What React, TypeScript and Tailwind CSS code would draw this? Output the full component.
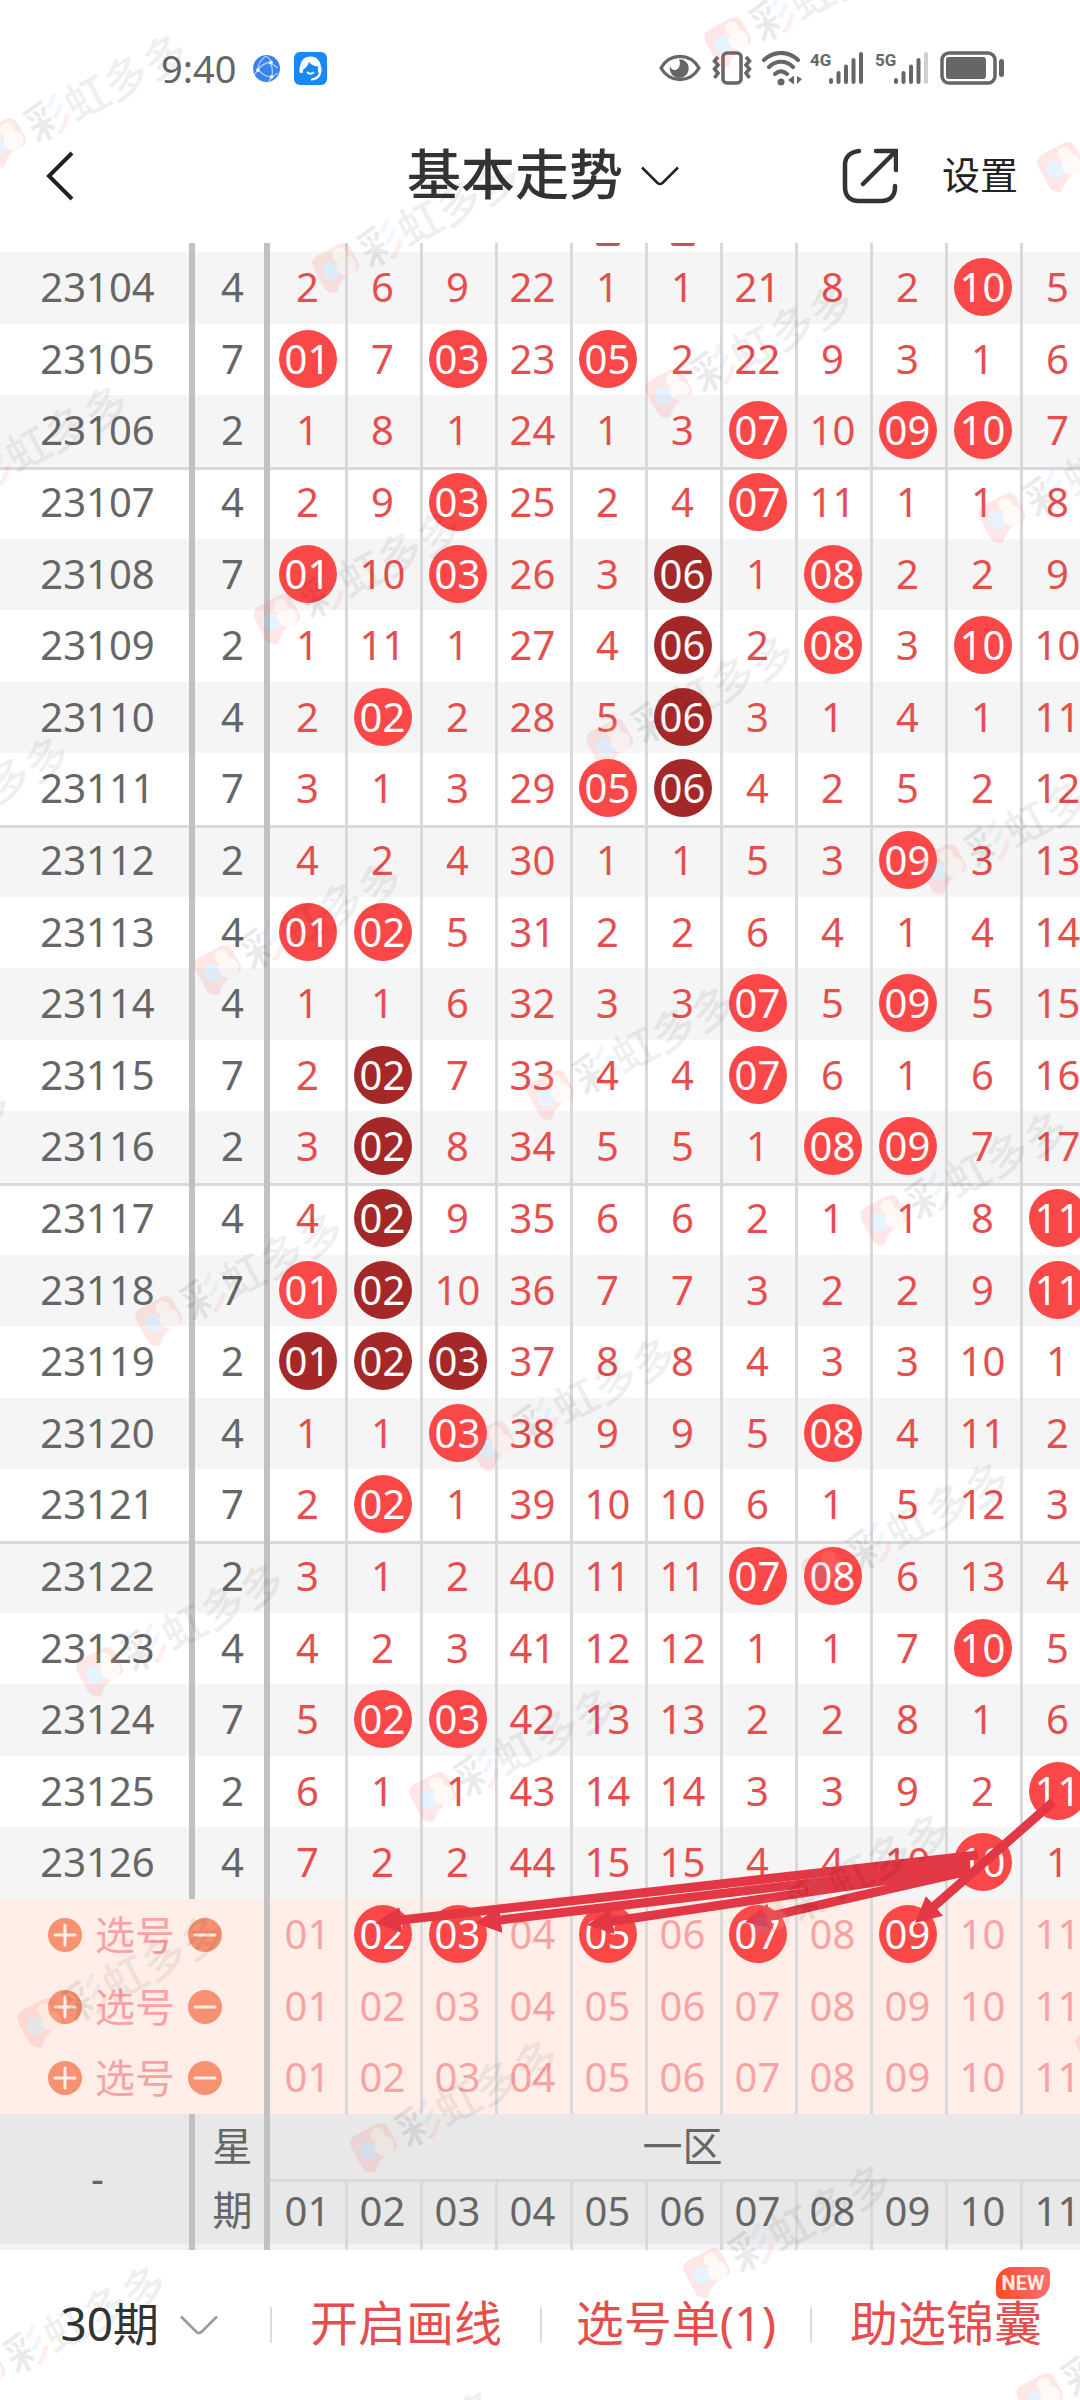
import React from 'react';
import clsx from 'clsx';

interface Draw {
  issue: number;
  week: number;
  // "*" marks a drawn ball, "#" a ball that repeats several draws in a row
  cells: string;
}

const draws: Draw[] = [
  { issue: 23104, week: 4, cells: '2 6 9 22 1 1 21 8 2 *10 5' },
  { issue: 23105, week: 7, cells: '*01 7 *03 23 *05 2 22 9 3 1 6' },
  { issue: 23106, week: 2, cells: '1 8 1 24 1 3 *07 10 *09 *10 7' },
  { issue: 23107, week: 4, cells: '2 9 *03 25 2 4 *07 11 1 1 8' },
  { issue: 23108, week: 7, cells: '*01 10 *03 26 3 #06 1 *08 2 2 9' },
  { issue: 23109, week: 2, cells: '1 11 1 27 4 #06 2 *08 3 *10 10' },
  { issue: 23110, week: 4, cells: '2 *02 2 28 5 #06 3 1 4 1 11' },
  { issue: 23111, week: 7, cells: '3 1 3 29 *05 #06 4 2 5 2 12' },
  { issue: 23112, week: 2, cells: '4 2 4 30 1 1 5 3 *09 3 13' },
  { issue: 23113, week: 4, cells: '*01 *02 5 31 2 2 6 4 1 4 14' },
  { issue: 23114, week: 4, cells: '1 1 6 32 3 3 *07 5 *09 5 15' },
  { issue: 23115, week: 7, cells: '2 #02 7 33 4 4 *07 6 1 6 16' },
  { issue: 23116, week: 2, cells: '3 #02 8 34 5 5 1 *08 *09 7 17' },
  { issue: 23117, week: 4, cells: '4 #02 9 35 6 6 2 1 1 8 *11' },
  { issue: 23118, week: 7, cells: '*01 #02 10 36 7 7 3 2 2 9 *11' },
  { issue: 23119, week: 2, cells: '#01 #02 #03 37 8 8 4 3 3 10 1' },
  { issue: 23120, week: 4, cells: '1 1 *03 38 9 9 5 *08 4 11 2' },
  { issue: 23121, week: 7, cells: '2 *02 1 39 10 10 6 1 5 12 3' },
  { issue: 23122, week: 2, cells: '3 1 2 40 11 11 *07 *08 6 13 4' },
  { issue: 23123, week: 4, cells: '4 2 3 41 12 12 1 1 7 *10 5' },
  { issue: 23124, week: 7, cells: '5 *02 *03 42 13 13 2 2 8 1 6' },
  { issue: 23125, week: 2, cells: '6 1 1 43 14 14 3 3 9 2 *11' },
  { issue: 23126, week: 4, cells: '7 2 2 44 15 15 4 4 10 *10 1' },
];

const numbers = ['01', '02', '03', '04', '05', '06', '07', '08', '09', '10', '11'];

const pickRows: string[][] = [['02', '03', '05', '07', '09'], [], []];

// Freehand guide lines, in table coordinates: x1, y1, x2, y2
const arrows = [
  [978, 1612, 375, 1680],
  [970, 1621, 475, 1680],
  [970, 1625, 587, 1682],
  [968, 1628, 745, 1679],
  [1053, 1559, 915, 1680],
];

const numCell = 'p-0 pb-[2px] text-center align-middle';
const columnLine = 'border-l-[3px] border-[#d9d9d9] pr-[3px]';
const bar = 'border-r-[6px] border-[#c1c1c1] pl-[6px]';

const Ball: React.FC<{ value: string; dark?: boolean }> = ({ value, dark }) => (
  <span
    className={clsx(
      'mx-auto flex size-[58px] items-center justify-center rounded-full text-white',
      dark ? 'bg-[#a52828]' : 'bg-[#fa4848]'
    )}
  >
    {value}
  </span>
);

const SignalBars: React.FC<{ weak?: boolean }> = ({ weak }) => (
  <svg width="36" height="34" viewBox="0 0 36 34" fill="none" strokeWidth="4" strokeLinecap="round" stroke="#666">
    <path d="M3 31v-2M10.500 31v-9M18 31V15.500M25.500 31V9" />
    <path d="M33 31V3" stroke={weak ? '#cfcfcf' : '#666'} />
  </svg>
);

const Chevron: React.FC<{ color: string }> = ({ color }) => (
  <svg width="38" height="20" viewBox="0 0 38 20" fill="none" stroke={color} strokeWidth="2.500" className="pointer-events-none">
    <path d="M1 1.500 16.500 17Q19 19 21.500 17L37 1.500" />
  </svg>
);

const StatusBar: React.FC = () => (
  <div className="flex h-[108px] items-end justify-between pb-[20px] pl-[161px] pr-[75px]">
    <div className="flex h-10 items-center">
      <span className="w-[92px] text-[38px] leading-[40px] text-[#666]">9:40</span>
      <svg width="27" height="27" viewBox="0 0 27 27" className="mr-[14px]">
        <circle cx="13.500" cy="13.500" r="13.500" fill="#3b82ee" />
        <g fill="none" stroke="#a9cdfb" strokeWidth="1.300">
          <path d="M13 1C7 5 5 10 5 15c4 4 9 7 14 7 1-6 1-11-3-15M5 15c3-5 7-7 13-8M13 1c3 2 5 4 6 8l6 4M5 15l-3 4M19 22l-3 4M19 22l6-4" />
        </g>
        <circle cx="5" cy="15" r="1.800" fill="#fff" />
        <circle cx="18" cy="7.500" r="1.800" fill="#fff" />
        <circle cx="18.500" cy="22" r="1.800" fill="#fff" />
      </svg>
      <svg width="33" height="33" viewBox="0 0 33 33">
        <rect width="33" height="33" rx="6" fill="#1788f5" />
        <path d="M7 17C7 9.500 11 5.500 16.500 5.500S26 9.500 26 17" fill="none" stroke="#fff" strokeWidth="2.200" />
        <path d="M8.500 18C7 9.500 11 5.500 16.500 5.500c5 0 8.500 3.500 9 9-5 0-8-1.500-10.500-4.500-1 3.500-3 6-6.500 8z" fill="#fff" />
        <rect x="5.500" y="14.500" width="3.500" height="6.500" rx="1.500" fill="#fff" />
        <rect x="24" y="14.500" width="3.500" height="6.500" rx="1.500" fill="#fff" />
        <path d="M26 20c0 4-3 6.500-8 7.500" fill="none" stroke="#fff" strokeWidth="2.200" strokeLinecap="round" />
        <path d="M13.500 20.500q3 2.500 6 0" fill="none" stroke="#fff" strokeWidth="1.800" strokeLinecap="round" />
      </svg>
    </div>
    <div className="flex h-10 items-center">
      <svg width="42" height="28" viewBox="0 0 42 28" className="mr-[11px]">
        <path d="M2 14C11-1.500 31-1.500 40 14 31 29.500 11 29.500 2 14Z" fill="none" stroke="#666" strokeWidth="3.200" />
        <path d="M20 5a9.500 9.500 0 1 1-9 7c1 3 3 4.500 5.500 4 4-1 5.500-6 3.500-11z" fill="#666" />
      </svg>
      <svg width="40" height="34" viewBox="0 0 40 34" fill="none" stroke="#666" className="mr-[10px]">
        <rect x="11" y="2" width="18" height="30" rx="4" strokeWidth="3.500" />
        <path d="m6 6-3.500 4L6 14l-3.500 4L6 22l-3.500 5M34 6l3.500 4-3.500 4 3.500 4-3.500 4 3.500 5" strokeWidth="3.500" />
      </svg>
      <svg width="41" height="35" viewBox="0 0 41 35" fill="none" stroke="#666" strokeWidth="4" strokeLinecap="round" className="mr-[7px]">
        <path d="M2 9C12-.500 26-.500 36 9M7 16c7-7 17-7 24 0M13 23c4-3.500 8-3.500 12 0" />
        <circle cx="19" cy="31" r="3.500" fill="#666" stroke="none" />
        <path d="M32 24.500v9l-6-4.500zM35 25l5 3-5 5z" fill="#666" stroke="none" />
      </svg>
      <span className="w-[18px] self-start whitespace-nowrap font-['Roboto',sans-serif] text-[17px] font-bold leading-[24px] text-[#666]">4G</span>
      <SignalBars />
      <span className="ml-[11px] w-[18px] self-start whitespace-nowrap font-['Roboto',sans-serif] text-[17px] font-bold leading-[24px] text-[#666]">5G</span>
      <SignalBars weak />
      <svg width="65" height="34" viewBox="0 0 65 34" className="ml-[11px]">
        <rect x="2" y="2" width="53" height="30" rx="7" fill="none" stroke="#666" strokeWidth="3.500" />
        <rect x="6" y="6" width="40" height="22" rx="3" fill="#666" />
        <rect x="59" y="8" width="5" height="18" rx="2.500" fill="#666" />
      </svg>
    </div>
  </div>
);

const Header: React.FC = () => (
  <header className="flex h-[135px] items-center justify-between pl-[44px] pr-[58px] text-[#222]">
    <button aria-label="返回" className="w-[200px]">
      <svg width="32" height="52" viewBox="0 0 32 52" fill="none" stroke="#222" strokeWidth="4">
        <path d="M28 3 5 26l23 23" />
      </svg>
    </button>
    <label className="flex items-center gap-[18px]">
      <select aria-label="走势类型" className="appearance-none bg-transparent pb-1 text-[54px] font-medium leading-[72px] text-[#333]">
        <option>基本走势</option>
      </select>
      <Chevron color="#222" />
    </label>
    <div className="flex w-[180px] items-center gap-[44px]">
      <button aria-label="分享">
        <svg width="56" height="56" viewBox="0 0 56 56" fill="none" stroke="#333" strokeWidth="4.500" strokeLinecap="round">
          <path d="M17 3C8 4 3 9 3 17v22c0 9 5 14 14 14h22c9 0 14-5 14-14v-1" />
          <path d="M34 3h20v19M53 4 21 36" />
        </svg>
      </button>
      <button className="whitespace-nowrap pb-1 text-[38px] leading-[56px]">设置</button>
    </div>
  </header>
);

const TrendTable: React.FC = () => (
  <div className="relative overflow-hidden">
    <table className="w-[1095px] table-fixed border-separate border-spacing-0 text-[40px] leading-[58px] text-[#666]">
      <colgroup>
        <col className="w-[195px]" />
        <col className="w-[75px]" />
        {numbers.map((n) => (
          <col key={n} className="w-[75px]" />
        ))}
      </colgroup>
      <tbody>
        {/* Bottom edge of the row scrolled under the header */}
        <tr className="h-[9px]">
          <td className={clsx('p-0', bar)} />
          <td className={clsx('p-0', bar)} />
          {numbers.map((n, i) => (
            <td key={n} className={clsx('p-0 align-top', i > 0 && columnLine)}>
              {(n === '05' || n === '06') && <div className="mx-auto h-[3px] w-6 rounded-b-full bg-[#cf5050]" />}
            </td>
          ))}
        </tr>
        {draws.map((draw, row) => {
          const place = draw.issue % 5;
          const groupLine = place === 2 && 'shadow-[inset_0_3px_0_#d9d9d9]';
          return (
            <tr
              key={draw.issue}
              className={clsx(row % 2 === 0 ? 'bg-[#f5f5f5]' : 'bg-white', place === 0 || place === 3 ? 'h-[71px]' : 'h-[72px]')}
            >
              <td className={clsx(numCell, bar, groupLine)}>{draw.issue}</td>
              <td className={clsx(numCell, bar, groupLine)}>{draw.week}</td>
              {draw.cells.split(' ').map((cell, i) => (
                <td key={i} className={clsx(numCell, 'text-[#e64e4e]', i > 0 && columnLine, groupLine)}>
                  {/^[*#]/.test(cell) ? <Ball value={cell.slice(1)} dark={cell[0] === '#'} /> : cell}
                </td>
              ))}
            </tr>
          );
        })}
        {pickRows.map((picked, row) => (
          <tr key={row} className={clsx('bg-[#feeee7] text-[#f8a3a3]', row === 1 ? 'h-[71px]' : 'h-[72px]')}>
            <td colSpan={2} className="border-r-[6px] border-[#c1c1c1] p-0 pl-[48px] align-middle">
              <div className="flex items-center gap-[13px]">
                <button aria-label="添加" className="flex size-[34px] items-center justify-center rounded-full bg-[#f69272]">
                  <svg width="24" height="24" viewBox="0 0 24 24" stroke="#feeee7" strokeWidth="3" strokeLinecap="round">
                    <path d="M12 2v20M2 12h20" />
                  </svg>
                </button>
                <span>选号</span>
                <button aria-label="删除" className="flex size-[34px] items-center justify-center rounded-full bg-[#f69272]">
                  <svg width="24" height="24" viewBox="0 0 24 24" stroke="#feeee7" strokeWidth="3" strokeLinecap="round">
                    <path d="M2 12h20" />
                  </svg>
                </button>
              </div>
            </td>
            {numbers.map((n, i) => (
              <td key={n} className={clsx(numCell, i > 0 && columnLine)}>
                <button aria-pressed={picked.includes(n)} className="block w-full">
                  {picked.includes(n) ? <Ball value={n} /> : n}
                </button>
              </td>
            ))}
          </tr>
        ))}
      </tbody>
      <tfoot className="bg-[#e8e8e8]">
        <tr className="h-[65px]">
          <td rowSpan={2} className={clsx(numCell, bar)}>-</td>
          <td rowSpan={2} className={clsx(numCell, bar, 'leading-[64px]')}>
            星
            <br />
            期
          </td>
          <td colSpan={11} className={numCell}>一区</td>
        </tr>
        <tr className="h-[65px]">
          {numbers.map((n, i) => (
            <td key={n} className={clsx(numCell, 'shadow-[inset_0_3px_0_#d9d9d9]', i > 0 && columnLine)}>{n}</td>
          ))}
        </tr>
        <tr className="h-[6px] bg-[#f1f1f6]">
          <td className={clsx('p-0', bar)} />
          <td className={clsx('p-0', bar)} />
          {numbers.map((n, i) => (
            <td key={n} className={clsx('p-0', i > 0 && columnLine)} />
          ))}
        </tr>
      </tfoot>
    </table>

    {/* Guide lines drawn over the trend */}
    <svg className="pointer-events-none absolute left-0 top-0 h-full w-[1095px]">
      <defs>
        <marker id="head" markerUnits="userSpaceOnUse" markerWidth="26" markerHeight="26" refX="2" refY="13" orient="auto">
          <path d="M0 0 26 13 0 26Z" fill="#e23744" />
        </marker>
      </defs>
      {arrows.map(([x1, y1, x2, y2]) => {
        // the shaft stops short so that the head's tip lands on the end point
        const k = 1 - 24 / Math.hypot(x2 - x1, y2 - y1);
        return (
          <line
            key={x2}
            x1={x1}
            y1={y1}
            x2={x1 + (x2 - x1) * k}
            y2={y1 + (y2 - y1) * k}
            stroke="#e23744"
            strokeWidth="9"
            markerEnd="url(#head)"
          />
        );
      })}
    </svg>
  </div>
);

const BottomBar: React.FC = () => (
  <nav className="grid h-[150px] grid-cols-4 items-center text-[48px] leading-[64px] text-[#e64e4e]">
    <label className="flex items-center justify-center gap-[20px] pl-2">
      <select aria-label="期数" className="appearance-none bg-transparent pb-1 text-[46px] text-[#333]">
        <option>30期</option>
      </select>
      <Chevron color="#999" />
    </label>
    <div className="flex items-center">
      <i className="h-9 w-[2px] bg-[#ddd]" />
      <button className="grow whitespace-nowrap pb-1">开启画线</button>
    </div>
    <div className="flex items-center">
      <i className="h-9 w-[2px] bg-[#ddd]" />
      <button className="grow whitespace-nowrap pb-1">选号单(1)</button>
    </div>
    <div className="relative flex items-center">
      <i className="h-9 w-[2px] bg-[#ddd]" />
      <button className="grow whitespace-nowrap pb-1">助选锦囊</button>
      <span className="absolute -top-6 right-[30px] flex h-8 w-[54px] items-center justify-center rounded-bl-[6px] rounded-br-[16px] rounded-tl-[16px] rounded-tr-[6px] bg-linear-to-r from-[#fc4a1f] to-[#fa6d6d] font-['Roboto',sans-serif] text-[20px] font-bold leading-[32px] text-[#ffe9e0]">
        NEW
      </span>
    </div>
  </nav>
);

const marks: { x: number; y: number }[] = [];
for (let j = -1; j < 8; j++) {
  for (let i = -1; i < 6; i++) {
    const x = 3 + i * 333 - j * 59;
    const y = 142 + i * 125 + j * 351;
    if (x > -180 && x < 1110 && y > -20 && y < 2500) marks.push({ x, y });
  }
}

const Watermark: React.FC = () => (
  <svg aria-hidden="true" className="pointer-events-none absolute inset-0 h-full w-full overflow-hidden">
    <defs>
      <pattern id="rainbow" patternUnits="userSpaceOnUse" x="29" y="-24" width="44" height="48">
        <rect width="24" height="48" fill="#000" />
        <rect x="24" width="20" height="28" fill="#3c9bff" />
        <rect x="24" y="28" width="20" height="20" fill="#ff3b3b" />
      </pattern>
      <g id="logo">
        <path d="M-22-10q0-10 10-10h22q10 0 10 10v15q0 8-8 7-14-2-25 10-9-3-9-11z" fill="#ff5a5a" />
        <circle cx="-8" cy="0" r="9" fill="#5ab4ff" />
        <circle cx="8" cy="3" r="10" fill="#ffd9cc" />
        <circle cx="7" cy="-10" r="7" fill="#ffd9a8" />
      </g>
    </defs>
    {marks.map(({ x, y }) => (
      <g
        key={`${x}-${y}`}
        transform={`translate(${x + 2} ${y}) rotate(-28)`}
        fontFamily="'Noto Sans CJK SC', sans-serif"
        fontSize="44"
        fontWeight="500"
      >
        <use href="#logo" opacity="0.14" />
        {x < 1050 && (
          <>
            <text x="27" y="16" fill="url(#rainbow)" opacity="0.08">彩</text>
            <text x="71" y="16" opacity="0.06">虹多多</text>
          </>
        )}
      </g>
    ))}
  </svg>
);

const App: React.FC = () => {
  return (
    <div className="relative overflow-hidden bg-white font-['Noto_Sans','Noto_Sans_CJK_SC',sans-serif]">
      <StatusBar />
      <Header />
      <TrendTable />
      <BottomBar />
      <Watermark />
    </div>
  );
};

export default App;
